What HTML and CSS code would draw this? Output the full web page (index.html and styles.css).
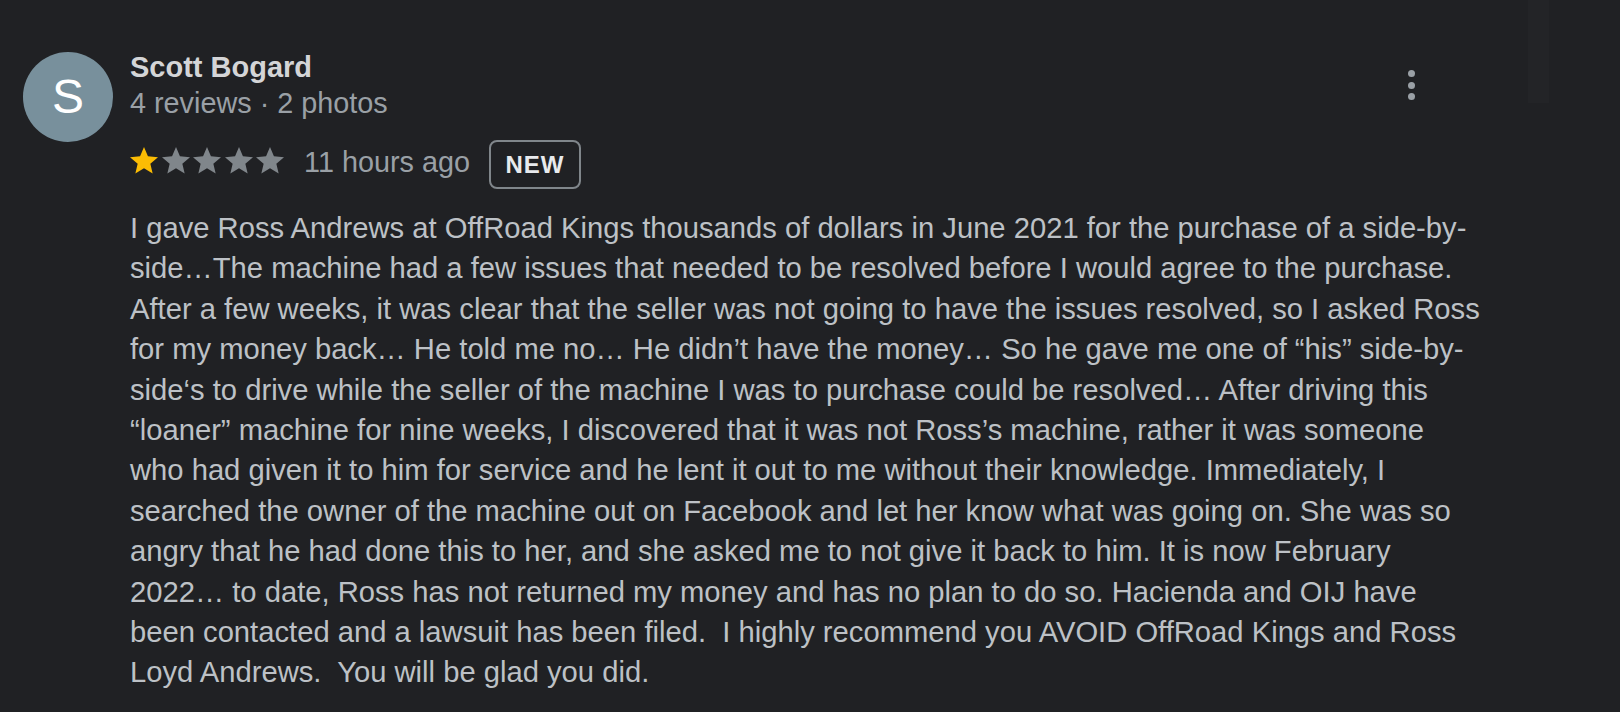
FILE: index.html
```html
<!DOCTYPE html>
<html lang="en">
<head>
<meta charset="utf-8">
<title>Review</title>
<link rel="stylesheet" href="styles.css">
</head>
<body>
<div class="strip"></div>
<div class="review">
  <div class="avatar">S</div>
  <div class="content">
    <div class="header">
      <div class="who">
        <div class="name">Scott Bogard</div>
        <div class="meta">4 reviews · 2 photos</div>
      </div>
      <div class="menu" aria-label="More">
        <span class="dot"></span><span class="dot"></span><span class="dot"></span>
      </div>
    </div>
    <div class="rating-row">
      <div class="stars">
        <svg class="star on" viewBox="2 2 20 19"><path d="M12 17.27L18.18 21l-1.64-7.03L22 9.24l-7.19-.61L12 2 9.19 8.63 2 9.24l5.46 4.73L5.82 21z"/></svg>
        <svg class="star" viewBox="2 2 20 19"><path d="M12 17.27L18.18 21l-1.64-7.03L22 9.24l-7.19-.61L12 2 9.19 8.63 2 9.24l5.46 4.73L5.82 21z"/></svg>
        <svg class="star" viewBox="2 2 20 19"><path d="M12 17.27L18.18 21l-1.64-7.03L22 9.24l-7.19-.61L12 2 9.19 8.63 2 9.24l5.46 4.73L5.82 21z"/></svg>
        <svg class="star" viewBox="2 2 20 19"><path d="M12 17.27L18.18 21l-1.64-7.03L22 9.24l-7.19-.61L12 2 9.19 8.63 2 9.24l5.46 4.73L5.82 21z"/></svg>
        <svg class="star" viewBox="2 2 20 19"><path d="M12 17.27L18.18 21l-1.64-7.03L22 9.24l-7.19-.61L12 2 9.19 8.63 2 9.24l5.46 4.73L5.82 21z"/></svg>
      </div>
      <span class="time">11 hours ago</span>
      <span class="badge">NEW</span>
    </div>
    <p class="text">I gave Ross Andrews at OffRoad Kings thousands of dollars in June 2021 for the purchase of a side-by-side…The machine had a few issues that needed to be resolved before I would agree to the purchase. After a few weeks, it was clear that the seller was not going to have the issues resolved, so I asked Ross for my money back… He told me no… He didn’t have the money… So he gave me one of “his” side-by-side‘s to drive while the seller of the machine I was to purchase could be resolved… After driving this “loaner” machine for nine weeks, I discovered that it was not Ross’s machine, rather it was someone who had given it to him for service and he lent it out to me without their knowledge. Immediately, I searched the owner of the machine out on Facebook and let her know what was going on. She was so angry that he had done this to her, and she asked me to not give it back to him. It is now February 2022… to date, Ross has not returned my money and has no plan to do so. Hacienda and OIJ have been contacted and a lawsuit has been filed.  I highly recommend you AVOID OffRoad Kings and Ross Loyd Andrews.  You will be glad you did.</p>
  </div>
</div>
</body>
</html>
```

FILE: styles.css
```css
html, body {
  margin: 0;
  padding: 0;
  background: #202124;
  height: 100%;
  overflow: hidden;
}

body {
  font-family: "Liberation Sans", Arial, sans-serif;
  position: relative;
}

.strip {
  position: absolute;
  left: 1528px;
  top: 0;
  width: 21px;
  height: 103px;
  background: #232427;
}

.review {
  display: flex;
  align-items: flex-start;
  gap: 17px;
  padding: 49px 0 0 23px;
}

.avatar {
  flex: none;
  width: 90px;
  height: 90px;
  margin-top: 3px;
  border-radius: 50%;
  background: #78909c;
  color: #ffffff;
  font-size: 48px;
  line-height: 90px;
  text-align: center;
}

.content {
  width: 1353.5px;
}

.header {
  display: flex;
  justify-content: space-between;
  align-items: center;
}

.name {
  font-size: 29px;
  font-weight: bold;
  line-height: 36px;
  color: #d4d5d7;
}

.meta {
  font-size: 28.8px;
  line-height: 36px;
  color: #9aa0a6;
}

.menu {
  display: flex;
  flex-direction: column;
  align-items: center;
  gap: 4.5px;
  margin-right: 68.5px;
}

.dot {
  width: 7px;
  height: 7px;
  border-radius: 50%;
  background: #9aa0a6;
}

.rating-row {
  display: flex;
  align-items: center;
  margin-top: 19px;
  height: 49px;
}

.stars {
  display: flex;
  gap: 3.5px;
  margin-top: -8px;
}

.star {
  width: 28px;
  height: 26.6px;
  fill: #80868b;
}

.star.on {
  fill: #fbbc04;
}

.time {
  margin-left: 20px;
  font-size: 28.8px;
  color: #9aa0a6;
  margin-top: -4px;
}

.badge {
  margin-left: 19px;
  box-sizing: border-box;
  height: 49px;
  width: 92px;
  border: 2px solid #80868b;
  border-radius: 8px;
  color: #e8eaed;
  font-size: 24px;
  font-weight: bold;
  letter-spacing: 1px;
  display: flex;
  align-items: center;
  justify-content: center;
}

.text {
  margin: 19px 0 0 0;
  font-size: 29.2px;
  line-height: 40.4px;
  color: #bdc1c6;
  white-space: pre-wrap;
}
```
